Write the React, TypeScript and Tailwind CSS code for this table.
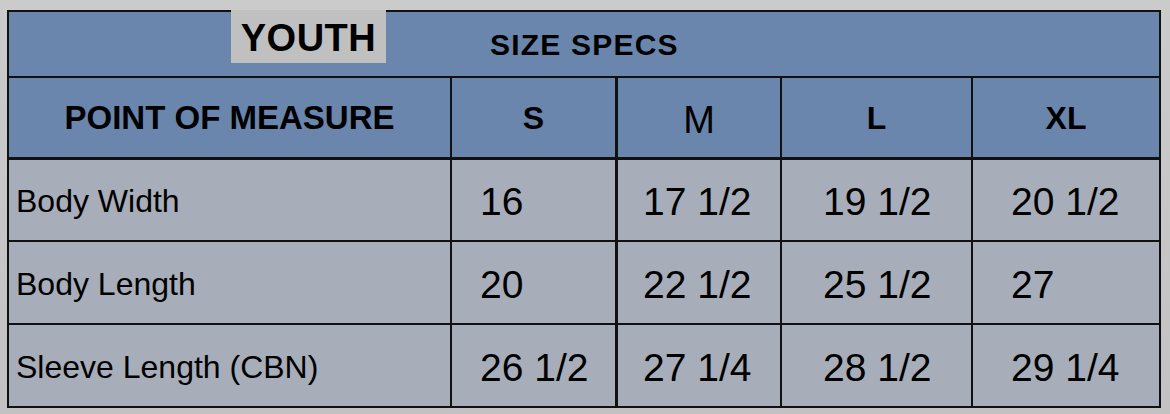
import React from "react";

const font = { fontFamily: '"Liberation Sans", Arial, sans-serif' };

type Row = { label: string; vals: string[]; h: string; border: boolean };

const rows: Row[] = [
  { label: "Body Width", vals: ["16", "17 1/2", "19 1/2", "20 1/2"], h: "h-[82px]", border: true },
  { label: "Body Length", vals: ["20", "22 1/2", "25 1/2", "27"], h: "h-[83px]", border: true },
  { label: "Sleeve Length (CBN)", vals: ["26 1/2", "27 1/4", "28 1/2", "29 1/4"], h: "h-[81px]", border: false },
];

export default function App() {
  return (
    <div
      className="w-[1170px] h-[414px] bg-gradient-to-b from-[#cbcbcb] to-[#c2c2c2] pt-[10px] pl-[7px] overflow-hidden text-black"
      style={font}
    >
      <div className="w-[1154px] border-2 border-[#111] bg-[#6a86ad]">
        {/* Title row */}
        <div className="h-[66px] border-b-2 border-[#111] flex items-start">
          <div className="ml-[222px] -mt-[2px] w-[155px] h-[53px] bg-[#c0c0c0] flex items-center justify-center">
            <span className="text-[38px] font-bold leading-none tracking-[0.5px] mt-[2px]">YOUTH</span>
          </div>
          <div className="ml-[104px] h-[64px] flex items-center">
            <span className="text-[30px] font-bold leading-none tracking-[1.2px] mt-[2px]">SIZE SPECS</span>
          </div>
        </div>
        {/* Header row */}
        <div className="h-[82px] border-b-[3px] border-[#111] flex">
          <div className="w-[443px] border-r-2 border-[#111] flex items-center justify-center">
            <span className="text-[33px] font-bold leading-none">POINT OF MEASURE</span>
          </div>
          <div className="w-[166px] border-r-[3px] border-[#111] flex items-center justify-center">
            <span className="text-[32px] font-bold leading-none">S</span>
          </div>
          <div className="w-[164px] border-r-2 border-[#111] flex items-center justify-center">
            <span className="text-[38px] leading-none mt-[4px]">M</span>
          </div>
          <div className="w-[191px] border-r-2 border-[#111] flex items-center justify-center">
            <span className="text-[32px] font-bold leading-none">L</span>
          </div>
          <div className="w-[186px] flex items-center justify-center">
            <span className="text-[32px] font-bold leading-none">XL</span>
          </div>
        </div>
        {/* Data rows */}
        {rows.map((r) => (
          <div
            key={r.label}
            className={`${r.h} flex bg-[#a7aeb9] ${r.border ? "border-b-2 border-[#111]" : ""}`}
          >
            <div className="w-[443px] border-r-2 border-[#111] flex items-center pl-[7px]">
              <span className="text-[32px] leading-none mt-[2px]">{r.label}</span>
            </div>
            <div className="w-[166px] border-r-[3px] border-[#111] flex items-center pl-[28px]">
              <span className="text-[39px] leading-none mt-[3px]">{r.vals[0]}</span>
            </div>
            <div className="w-[164px] border-r-2 border-[#111] flex items-center pl-[25px]">
              <span className="text-[39px] leading-none mt-[3px]">{r.vals[1]}</span>
            </div>
            <div className="w-[191px] border-r-2 border-[#111] flex items-center pl-[41px]">
              <span className="text-[39px] leading-none mt-[3px]">{r.vals[2]}</span>
            </div>
            <div className="w-[186px] flex items-center pl-[38px]">
              <span className="text-[39px] leading-none mt-[3px]">{r.vals[3]}</span>
            </div>
          </div>
        ))}
      </div>
    </div>
  );
}
